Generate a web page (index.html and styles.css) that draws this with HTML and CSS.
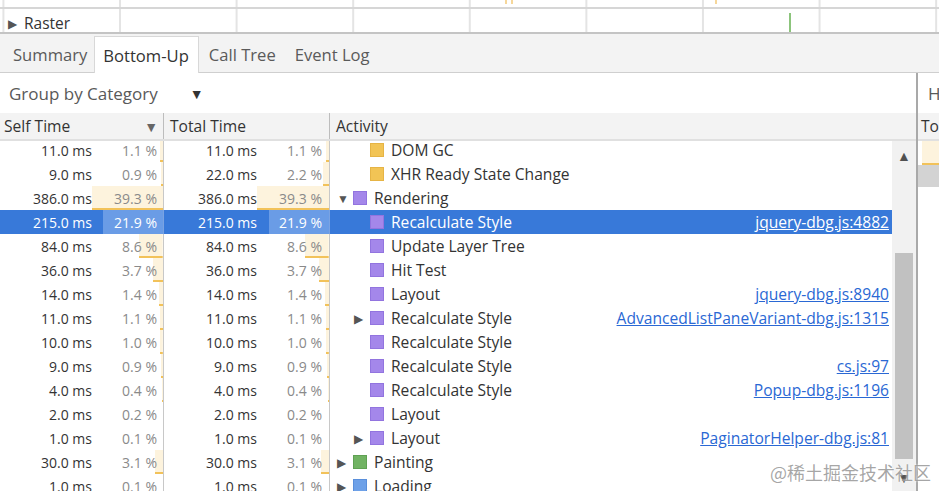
FILE: index.html
```html
<!DOCTYPE html>
<html>
<head>
<meta charset="utf-8">
<link rel="stylesheet" href="styles.css">
</head>
<body>
<div class="app">
  <div class="timeline">
    <div class="tl-top">
      <span class="tl-mark m1"></span><span class="tl-mark m2"></span><span class="tl-mark m3"></span>
    </div>
    <div class="tl-raster"><span class="tri-r">&#9654;</span>Raster<span class="tl-green"></span></div>
  </div>
  <div class="tabs">
    <div class="tab first">Summary</div>
    <div class="tab active">Bottom-Up</div>
    <div class="tab">Call Tree</div>
    <div class="tab">Event Log</div>
  </div>
  <div class="main">
    <div class="left">
      <div class="toolbar"><span>Group by Category</span><span class="dd">&#9660;</span></div>
      <div class="grid">
        <div class="head">
          <div class="hc c-self">Self Time<span class="sort">&#9660;</span></div>
          <div class="hc c-total">Total Time</div>
          <div class="hc c-act">Activity</div>
        </div>
        <div class="body">
          <div class="rows">
            <div class="row">
              <div class="c c-self"><span class="ms">11.0 ms</span><span class="pc" style="--w:3px">1.1 %</span></div>
              <div class="c c-total"><span class="ms">11.0 ms</span><span class="pc" style="--w:3px">1.1 %</span></div>
              <div class="c c-act l1"><span class="tw"></span><span class="sq y"></span><span class="nm">DOM GC</span></div>
            </div>
            <div class="row">
              <div class="c c-self"><span class="ms">9.0 ms</span><span class="pc" style="--w:2.5px">0.9 %</span></div>
              <div class="c c-total"><span class="ms">22.0 ms</span><span class="pc" style="--w:6px">2.2 %</span></div>
              <div class="c c-act l1"><span class="tw"></span><span class="sq y"></span><span class="nm">XHR Ready State Change</span></div>
            </div>
            <div class="row">
              <div class="c c-self"><span class="ms">386.0 ms</span><span class="pc" style="--w:108px">39.3 %</span></div>
              <div class="c c-total"><span class="ms">386.0 ms</span><span class="pc" style="--w:108px">39.3 %</span></div>
              <div class="c c-act l0"><span class="tw">&#9660;</span><span class="sq p"></span><span class="nm">Rendering</span></div>
            </div>
            <div class="row sel">
              <div class="c c-self"><span class="ms">215.0 ms</span><span class="pc" style="--w:60px">21.9 %</span></div>
              <div class="c c-total"><span class="ms">215.0 ms</span><span class="pc" style="--w:60px">21.9 %</span></div>
              <div class="c c-act l1"><span class="tw"></span><span class="sq p"></span><span class="nm">Recalculate Style</span><a class="lk">jquery-dbg.js:4882</a></div>
            </div>
            <div class="row">
              <div class="c c-self"><span class="ms">84.0 ms</span><span class="pc" style="--w:23.7px">8.6 %</span></div>
              <div class="c c-total"><span class="ms">84.0 ms</span><span class="pc" style="--w:23.7px">8.6 %</span></div>
              <div class="c c-act l1"><span class="tw"></span><span class="sq p"></span><span class="nm">Update Layer Tree</span></div>
            </div>
            <div class="row">
              <div class="c c-self"><span class="ms">36.0 ms</span><span class="pc" style="--w:10px">3.7 %</span></div>
              <div class="c c-total"><span class="ms">36.0 ms</span><span class="pc" style="--w:10px">3.7 %</span></div>
              <div class="c c-act l1"><span class="tw"></span><span class="sq p"></span><span class="nm">Hit Test</span></div>
            </div>
            <div class="row">
              <div class="c c-self"><span class="ms">14.0 ms</span><span class="pc" style="--w:4px">1.4 %</span></div>
              <div class="c c-total"><span class="ms">14.0 ms</span><span class="pc" style="--w:4px">1.4 %</span></div>
              <div class="c c-act l1"><span class="tw"></span><span class="sq p"></span><span class="nm">Layout</span><a class="lk">jquery-dbg.js:8940</a></div>
            </div>
            <div class="row">
              <div class="c c-self"><span class="ms">11.0 ms</span><span class="pc" style="--w:3px">1.1 %</span></div>
              <div class="c c-total"><span class="ms">11.0 ms</span><span class="pc" style="--w:3px">1.1 %</span></div>
              <div class="c c-act l1"><span class="tw">&#9654;</span><span class="sq p"></span><span class="nm">Recalculate Style</span><a class="lk">AdvancedListPaneVariant-dbg.js:1315</a></div>
            </div>
            <div class="row">
              <div class="c c-self"><span class="ms">10.0 ms</span><span class="pc" style="--w:2.8px">1.0 %</span></div>
              <div class="c c-total"><span class="ms">10.0 ms</span><span class="pc" style="--w:2.8px">1.0 %</span></div>
              <div class="c c-act l1"><span class="tw"></span><span class="sq p"></span><span class="nm">Recalculate Style</span></div>
            </div>
            <div class="row">
              <div class="c c-self"><span class="ms">9.0 ms</span><span class="pc" style="--w:2.5px">0.9 %</span></div>
              <div class="c c-total"><span class="ms">9.0 ms</span><span class="pc" style="--w:2.5px">0.9 %</span></div>
              <div class="c c-act l1"><span class="tw"></span><span class="sq p"></span><span class="nm">Recalculate Style</span><a class="lk">cs.js:97</a></div>
            </div>
            <div class="row">
              <div class="c c-self"><span class="ms">4.0 ms</span><span class="pc" style="--w:1px">0.4 %</span></div>
              <div class="c c-total"><span class="ms">4.0 ms</span><span class="pc" style="--w:1px">0.4 %</span></div>
              <div class="c c-act l1"><span class="tw"></span><span class="sq p"></span><span class="nm">Recalculate Style</span><a class="lk">Popup-dbg.js:1196</a></div>
            </div>
            <div class="row">
              <div class="c c-self"><span class="ms">2.0 ms</span><span class="pc" style="--w:0.5px">0.2 %</span></div>
              <div class="c c-total"><span class="ms">2.0 ms</span><span class="pc" style="--w:0.5px">0.2 %</span></div>
              <div class="c c-act l1"><span class="tw"></span><span class="sq p"></span><span class="nm">Layout</span></div>
            </div>
            <div class="row">
              <div class="c c-self"><span class="ms">1.0 ms</span><span class="pc" style="--w:0.3px">0.1 %</span></div>
              <div class="c c-total"><span class="ms">1.0 ms</span><span class="pc" style="--w:0.3px">0.1 %</span></div>
              <div class="c c-act l1"><span class="tw">&#9654;</span><span class="sq p"></span><span class="nm">Layout</span><a class="lk">PaginatorHelper-dbg.js:81</a></div>
            </div>
            <div class="row">
              <div class="c c-self"><span class="ms">30.0 ms</span><span class="pc" style="--w:8.5px">3.1 %</span></div>
              <div class="c c-total"><span class="ms">30.0 ms</span><span class="pc" style="--w:8.5px">3.1 %</span></div>
              <div class="c c-act l0"><span class="tw">&#9654;</span><span class="sq g"></span><span class="nm">Painting</span></div>
            </div>
            <div class="row">
              <div class="c c-self"><span class="ms">1.0 ms</span><span class="pc" style="--w:0.3px">0.1 %</span></div>
              <div class="c c-total"><span class="ms">1.0 ms</span><span class="pc" style="--w:0.3px">0.1 %</span></div>
              <div class="c c-act l0"><span class="tw">&#9654;</span><span class="sq b"></span><span class="nm">Loading</span></div>
            </div>
          </div>
          <div class="sbar">
            <span class="arr up">&#9650;</span>
            <span class="thumb"></span>
            <span class="arr dn">&#9660;</span>
          </div>
        </div>
      </div>
    </div>
    <div class="right">
      <div class="r-tool">H</div>
      <div class="r-head">To</div>
      <div class="r-row1"></div>
      <div class="r-row2"></div>
    </div>
  </div>
  <div class="wm">@稀土掘金技术社区</div>
</div>
</body>
</html>
```
FILE: styles.css
```css
* { box-sizing: border-box; }
html, body { margin: 0; padding: 0; }
body {
  width: 939px; height: 491px; overflow: hidden; background: #fff;
  font-family: "Open Sans", "Noto Sans", sans-serif; color: #333;
}
.app { position: relative; width: 939px; height: 491px; display: flex; flex-direction: column; }

.timeline {
  position: relative; height: 34px; flex: none;
  border-bottom: 2px solid #c4c4c4;
  background-image: linear-gradient(to right, #e4e4e4 2px, transparent 2px);
  background-size: 116.6px 100%;
  background-position: 119px 0;
}
.tl-top { height: 9px; border-bottom: 2px solid #d6d6d6; position: relative; }
.tl-mark { position: absolute; top: 0; width: 2px; height: 4px; background: #f6d79a; }
.m1 { left: 505px; } .m2 { left: 511px; } .m3 { left: 715px; }
.tl-raster { height: 23px; display: flex; align-items: center; padding-left: 8px; padding-top: 5px; font-size: 15.5px; color: #333; position: relative; }
.tri-r { font-size: 12px; color: #555; margin-right: 7px; }
.tl-green { position: absolute; left: 789px; top: 4px; width: 2px; height: 19px; background: #8cc47c; }

.tabs {
  height: 39px; flex: none; background: #f3f3f3; border-bottom: 1px solid #cfcfcf;
  display: flex; align-items: flex-end; padding-left: 3px;
}
.tab { height: 36px; padding: 0 8px 0 9px; display: flex; align-items: center; font-size: 16.6px; color: #5a5a5a; border: 1px solid transparent; border-bottom: none; }
.tab.first { padding-right: 6px; }
.tab.active { background: #fff; border-color: #d8d8d8; color: #333; margin-bottom: -1px; height: 37px; padding: 0 9px 0 8px; }

.main { flex: 1; display: flex; min-height: 0; }
.left { width: 918px; flex: none; display: flex; flex-direction: column; border-right: 2px solid #a9a9a9; }
.toolbar { height: 40px; flex: none; display: flex; align-items: center; padding-left: 9px; font-size: 17px; color: #595959; }
.toolbar .dd { font-size: 14px; margin-left: 32px; color: #333; }

.grid { flex: 1; display: flex; flex-direction: column; min-height: 0; }
.head { height: 28px; flex: none; display: flex; background: #f3f3f3; border-bottom: 2px solid #e0e0e0; font-size: 15.6px; position: relative; z-index: 1; }
.hc { display: flex; align-items: center; padding-left: 4px; border-right: 1px solid #bdbdbd; color: #333; }
.hc.c-total { padding-left: 6px; }
.hc.c-act { border-right: none; flex: 1; padding-left: 6px; }
.sort { margin-left: auto; margin-right: 5px; font-size: 14px; color: #666; }
.c-self { width: 164px; flex: none; }
.c-total { width: 166px; flex: none; }

.body { flex: 1; display: flex; min-height: 0; overflow: hidden; }
.rows { flex: 1; margin-top: -3px; font-size: 14px; }
.row { height: 24px; display: flex; }
.c { display: flex; align-items: center; height: 24px; border-right: 1px solid #c8c8c8; }
.c.c-act { border-right: none; flex: 1; padding-right: 3px; font-size: 15.6px; }
.ms { width: 92px; text-align: right; color: #333; }
.pc {
  flex: 1; align-self: stretch; display: flex; align-items: center; justify-content: flex-end;
  padding-right: 6px; color: #8a8a8a;
  background:
    linear-gradient(#f2c25a, #f2c25a) right bottom / var(--w) 2px no-repeat,
    linear-gradient(#fdf3dd, #fdf3dd) right top / var(--w) 100% no-repeat;
}
.c-self .ms { width: 92px; }
.c-total .ms { width: 93px; }
.c-total .pc { padding-right: 7px; }
.tw { width: 16px; flex: none; font-size: 12px; color: #555; text-align: left; }
.l0 { padding-left: 7px; }
.l1 { padding-left: 24px; }
.sq { width: 14px; height: 14px; flex: none; margin-right: 7px; border: 1px solid; }
.sq.y { background: #f2c455; border-color: #e6b445; }
.sq.p { background: #a487ea; border-color: #9274df; }
.sq.g { background: #71b363; border-color: #5fa153; }
.sq.b { background: #6ea1e8; border-color: #5a8fdb; }
.nm { color: #333; white-space: nowrap; }
.lk { margin-left: auto; color: #2a68d4; text-decoration: underline; white-space: nowrap; }

.row.sel { background: #3879d9; }
.row.sel .c { border-right-color: #7aa3e2; }
.row.sel .ms, .row.sel .pc, .row.sel .nm, .row.sel .lk, .row.sel .tw { color: #fff; }
.row.sel .pc { background: linear-gradient(#6a9ce6, #6a9ce6) right top / var(--w) 100% no-repeat; }

.sbar { width: 24px; flex: none; background: #f1f1f1; position: relative; display: flex; flex-direction: column; align-items: center; }
.arr { font-size: 14px; color: #505050; line-height: 1; }
.arr.up { margin-top: 8px; }
.thumb { width: 18px; height: 206px; background: #c1c1c1; margin-top: 90px; }
.arr.dn { margin-top: 12px; }

.right { flex: 1; display: flex; flex-direction: column; overflow: hidden; }
.r-tool { height: 40px; display: flex; align-items: center; padding-left: 10px; font-size: 17px; color: #595959; }
.r-head { height: 28px; background: #f3f3f3; border-bottom: 2px solid #e0e0e0; display: flex; align-items: center; padding-left: 3px; font-size: 15.6px; }
.r-row1 { height: 24px; margin-left: 4px; background: #fdf3dd; border-bottom: 2px solid #f2c25a; }
.r-row2 { height: 22px; background: #d3d3d3; }

.wm {
  position: absolute; left: 770px; top: 459px; font-size: 18px;
  font-family: "Noto Sans CJK SC", sans-serif; color: rgba(150,150,150,0.85);
  text-shadow: 0 0 2px #fff;
}
```
